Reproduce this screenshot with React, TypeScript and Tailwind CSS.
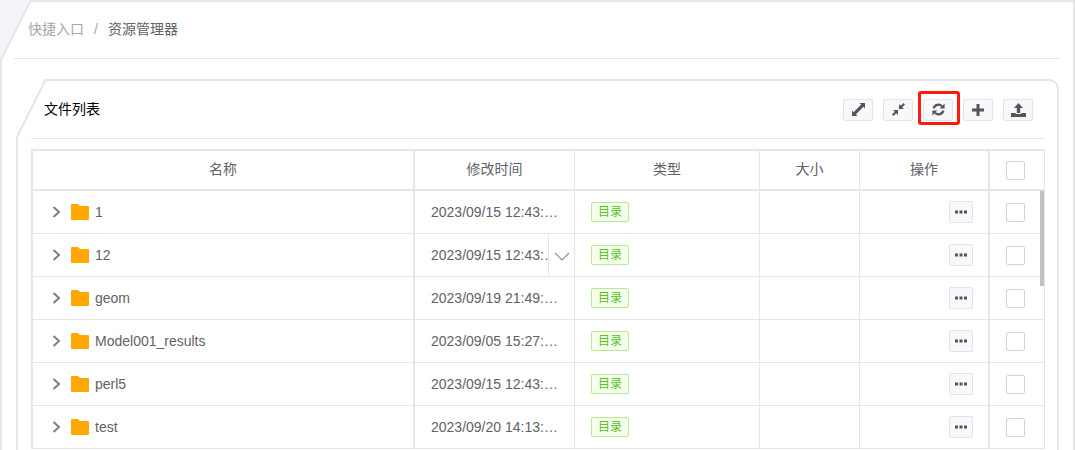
const rows = [
  { name: "1", time: "2023/09/15 12:43:26" },
  { name: "12", time: "2023/09/15 12:43:26", hover: true },
  { name: "geom", time: "2023/09/19 21:49:26" },
  { name: "Model001_results", time: "2023/09/05 15:27:40" },
  { name: "perl5", time: "2023/09/15 12:43:26" },
  { name: "test", time: "2023/09/20 14:13:52" },
];

const cols = "grid grid-cols-[382px_160px_185px_100px_130px_50px]";

function ToolButton({ children }: { children: React.ReactNode }) {
  return (
    <button className="w-[30px] h-[22px] flex items-center justify-center bg-[#f7f8fc] border border-[#e4e4e4] rounded-[2px]">
      {children}
    </button>
  );
}

function ExpandIcon() {
  return (
    <svg width="13" height="13" viewBox="0 0 13 13" fill="#555">
      <path d="M7.5 0 H13 V5.5 L11 3.6 L3.6 11 L5.5 13 H0 V7.5 L2 9.4 L9.4 2 Z" />
      <path d="M9.4 2 L11 3.6 L3.6 11 L2 9.4 Z" stroke="#555" strokeWidth="1" />
    </svg>
  );
}

function CompressIcon() {
  return (
    <svg width="13" height="13" viewBox="0 0 13 13" fill="#555">
      <path d="M7 1 V6 H12 L10.2 4.2 L13 1.4 L11.6 0 L8.8 2.8 Z" />
      <path d="M6 12 V7 H1 L2.8 8.8 L0 11.6 L1.4 13 L4.2 10.2 Z" />
    </svg>
  );
}

function RefreshIcon() {
  return (
    <svg width="13" height="13" viewBox="0 0 13 13">
      <path d="M1.6 5.4 A5 5 0 0 1 10 3.2" fill="none" stroke="#555" strokeWidth="2.2" />
      <path d="M12.6 0.6 V5.6 H7.6 Z" fill="#555" />
      <path d="M11.4 7.6 A5 5 0 0 1 3 9.8" fill="none" stroke="#555" strokeWidth="2.2" />
      <path d="M0.4 12.4 V7.4 H5.4 Z" fill="#555" />
    </svg>
  );
}

function PlusIcon() {
  return (
    <svg width="12" height="12" viewBox="0 0 12 12" fill="#555">
      <path d="M4.5 0 H7.5 V4.5 H12 V7.5 H7.5 V12 H4.5 V7.5 H0 V4.5 H4.5 Z" />
    </svg>
  );
}

function UploadIcon() {
  return (
    <svg width="15" height="14" viewBox="0 0 15 14" fill="#555">
      <path d="M7.5 0 L12 5 H9.2 V10 H5.8 V5 H3 Z" />
      <path d="M0 10 H4.6 V11 H10.4 V10 H15 V14 H0 Z" />
    </svg>
  );
}

function Checkbox() {
  return <div className="ml-[1px] w-[19px] h-[19px] border border-[#d4d4d4] rounded-[2px] bg-white" />;
}

function Row({ name, time, hover }: { name: string; time: string; hover?: boolean }) {
  return (
    <div className={`${cols} h-[43px] border-b border-[#e6e6e6] text-[14px] text-[#606266]`}>
      <div className="flex items-center pl-[19px] border-r-2 border-[#e6e6e6]">
        <svg width="9" height="14" viewBox="0 0 9 14" fill="none" stroke="#7b7f87" strokeWidth="2">
          <path d="M1.5 2 L7 7 L1.5 12" />
        </svg>
        <svg className="ml-[10px]" width="18" height="16" viewBox="0 0 18 16" fill="#ffa800">
          <path d="M1 0 H7 L9 2 H17 A1 1 0 0 1 18 3 V15 A1 1 0 0 1 17 16 H1 A1 1 0 0 1 0 15 V1 A1 1 0 0 1 1 0 Z" />
        </svg>
        <span className="ml-[6px]">{name}</span>
      </div>
      <div className="flex items-center pl-[16px] border-r border-[#e6e6e6]">
        <div className={hover ? "w-[117px] overflow-hidden" : "w-[128px]"}>
          <div className="w-[128px] truncate">{time}</div>
        </div>
        {hover && (
          <div className="ml-auto w-[26px] h-full border-l border-[#e6e6e6] flex items-center justify-center">
            <svg className="mt-[2px]" width="16" height="9" viewBox="0 0 16 9" fill="none" stroke="#8a8e96" strokeWidth="1.2">
              <path d="M1 1 L8 8 L15 1" />
            </svg>
          </div>
        )}
      </div>
      <div className="flex items-center pl-[16px] border-r border-[#e6e6e6]">
        <span className="w-[38px] h-[20px] flex items-center justify-center bg-[#f6ffed] border border-[#b7eb8f] rounded-[2px] text-[12px] text-[#52c41a]">
          目录
        </span>
      </div>
      <div className="border-r border-[#e6e6e6]" />
      <div className="flex items-center justify-end pr-[15px] border-r-2 border-[#e6e6e6]">
        <button className="w-[24px] h-[22px] flex items-center justify-center bg-[#f7f8fc] border border-[#e4e4e4] rounded-[2px]">
          <svg width="12" height="4" viewBox="0 0 12 4" fill="#555">
            <rect width="3" height="3" y="0.5" />
            <rect width="3" height="3" x="4.5" y="0.5" />
            <rect width="3" height="3" x="9" y="0.5" />
          </svg>
        </button>
      </div>
      <div className="flex items-center justify-center">
        <Checkbox />
      </div>
    </div>
  );
}

export default function App() {
  return (
    <div className="relative w-[1075px] h-[450px] overflow-hidden bg-white font-['Liberation_Sans','Noto_Sans_CJK_SC',sans-serif]">
      <div className="h-[510px] border-t-2 border-l-2 border-r-2 border-[#e6e6e6] pl-[12px] pr-[14px]">
        {/* Breadcrumb */}
        <div className="h-[57px] flex items-center pl-[14px] pb-[2px] border-b border-[#e6e6e6] text-[14px] text-[#a3a6ad]">
          <span>快捷入口</span>
          <span className="mx-[10px]">/</span>
          <span className="text-[#606266]">资源管理器</span>
        </div>

        {/* File list card */}
        <div className="relative ml-[2px] mt-[20px] border-t-2 border-l-2 border-r-2 border-[#e6e6e6] rounded-tr-[10px] h-[400px] pl-[13px] pr-[12px]">
          <div className="h-[58px] flex items-center justify-between border-b border-[#e6e6e6]">
            <span className="pl-[13px] text-[14px] text-black">文件列表</span>
            <div className="flex gap-[10px] pr-[12px]">
              <ToolButton><ExpandIcon /></ToolButton>
              <ToolButton><CompressIcon /></ToolButton>
              <ToolButton><RefreshIcon /></ToolButton>
              <ToolButton><PlusIcon /></ToolButton>
              <ToolButton><UploadIcon /></ToolButton>
            </div>
          </div>

          {/* Table */}
          <div className="relative mt-[10px] w-[1014px] border-t-2 border-l-2 border-r border-[#e6e6e6]">
            <div className={`${cols} h-[40px] border-b-2 border-[#e6e6e6] text-[14px] text-[#606266]`}>
              <div className="flex items-center justify-center pb-[2px] border-r-2 border-[#e6e6e6]">名称</div>
              <div className="flex items-center justify-center pb-[2px] border-r border-[#e6e6e6]">修改时间</div>
              <div className="flex items-center justify-center pb-[2px] border-r border-[#e6e6e6]">类型</div>
              <div className="flex items-center justify-center pb-[2px] border-r border-[#e6e6e6]">大小</div>
              <div className="flex items-center justify-center pb-[2px] border-r-2 border-[#e6e6e6]">操作</div>
              <div className="flex items-center justify-center"><Checkbox /></div>
            </div>
            {rows.map((r) => (
              <Row key={r.name} {...r} />
            ))}
            <div className="absolute right-0 top-[40px] w-[4px] h-[95px] bg-[#c1c1c1]" />
          </div>
        </div>
      </div>

      {/* Cut corners */}
      <svg className="absolute left-0 top-0" width="32" height="62" viewBox="0 0 32 62">
        <polygon points="0,0 31,0 1,60 0,60" fill="#f3f4f7" />
        <line x1="31" y1="0" x2="1" y2="60" stroke="#e6e6e6" strokeWidth="2" />
      </svg>
      <svg className="absolute left-[16px] top-[79px]" width="32" height="60" viewBox="0 0 32 60">
        <polygon points="0,0 30,0 1,58 0,58" fill="#ffffff" />
        <line x1="30" y1="0" x2="1" y2="58" stroke="#e6e6e6" strokeWidth="2" />
      </svg>

      {/* Highlight around refresh */}
      <div className="absolute left-[918px] top-[91px] w-[42px] h-[34px] border-[3px] border-[#ff1a0f] rounded-[3px]" />
    </div>
  );
}
